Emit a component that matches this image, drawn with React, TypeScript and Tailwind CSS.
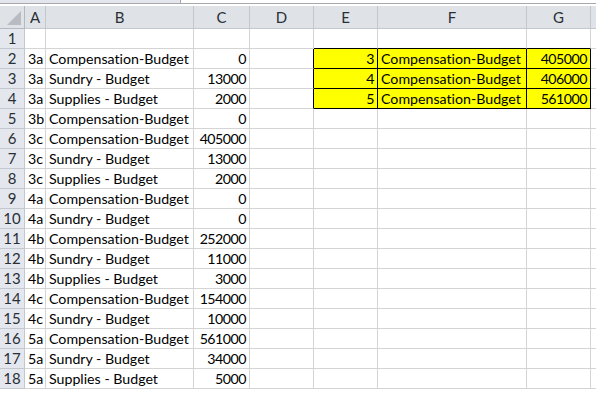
import React from 'react';

const rows: [string, string, string][] = [
  ['', '', ''],
  ['3a', 'Compensation-Budget', '0'],
  ['3a', 'Sundry - Budget', '13000'],
  ['3a', 'Supplies - Budget', '2000'],
  ['3b', 'Compensation-Budget', '0'],
  ['3c', 'Compensation-Budget', '405000'],
  ['3c', 'Sundry - Budget', '13000'],
  ['3c', 'Supplies - Budget', '2000'],
  ['4a', 'Compensation-Budget', '0'],
  ['4a', 'Sundry - Budget', '0'],
  ['4b', 'Compensation-Budget', '252000'],
  ['4b', 'Sundry - Budget', '11000'],
  ['4b', 'Supplies - Budget', '3000'],
  ['4c', 'Compensation-Budget', '154000'],
  ['4c', 'Sundry - Budget', '10000'],
  ['5a', 'Compensation-Budget', '561000'],
  ['5a', 'Sundry - Budget', '34000'],
  ['5a', 'Supplies - Budget', '5000'],
];

const lookup: Record<number, [string, string, string]> = {
  2: ['3', 'Compensation-Budget', '405000'],
  3: ['4', 'Compensation-Budget', '406000'],
  4: ['5', 'Compensation-Budget', '561000'],
};

const cols = ['A', 'B', 'C', 'D', 'E', 'F', 'G', ''];

const Cell = ({
  children,
  right,
  className = '',
}: {
  children?: React.ReactNode;
  right?: boolean;
  className?: string;
}) => (
  <div
    className={`h-[20px] border-r border-b border-[#d4d4d4] px-[3px] leading-[19px] whitespace-nowrap overflow-hidden ${
      right ? 'text-right tracking-[-0.5px]' : ''
    } ${className}`}
  >
    {children}
  </div>
);

export default function App() {
  return (
    <div
      className="w-[596px] h-[393px] overflow-hidden bg-white text-[14.2px] text-black [font-variant-ligatures:none]"
      style={{ fontFamily: 'Lato, "Liberation Sans", sans-serif' }}
    >
      {/* formula bar edge */}
      <div className="flex h-[4px] border-b border-[#a5a9ae]">
        <div className="w-[181px] bg-[#e3e6ea] border-r border-[#a5a9ae]"></div>
        <div className="flex-1 bg-white"></div>
      </div>
      <div className="h-[2px] bg-white"></div>

      <div className="grid grid-cols-[25px_21px_148px_56px_64px_64px_149px_64px_1fr]">
        {/* column header row */}
        <div className="h-[23px] bg-[#dfe3e8] border-r border-b border-[#b4b9bf] relative">
          <div className="absolute right-[3px] bottom-[3px] w-0 h-0 border-l-[14px] border-l-transparent border-b-[14px] border-b-[#b8bcc2]"></div>
        </div>
        {cols.map((c, i) => (
          <div
            key={i}
            className="h-[23px] bg-[#dfe3e8] border-r border-b border-[#c3c8ce] text-center leading-[22px] text-[15px] text-[#2a2f36]"
          >
            {c}
          </div>
        ))}

        {rows.map((r, i) => {
          const n = i + 1;
          const lk = lookup[n];
          const yellow = 'bg-[#ffff00] border-r-black border-b-black';
          return (
            <React.Fragment key={n}>
              <div className="h-[20px] bg-[#e4e8ee] border-r border-b border-[#c3c8ce] text-center leading-[19px] text-[15px] text-[#2a2f36]">
                {n}
              </div>
              <Cell>{r[0]}</Cell>
              <Cell>{r[1]}</Cell>
              <Cell right>{r[2]}</Cell>
              <Cell className={lk ? 'border-r-black' : ''}></Cell>
              {lk ? (
                <>
                  <Cell right className={yellow}>{lk[0]}</Cell>
                  <Cell className={yellow}>{lk[1]}</Cell>
                  <Cell right className={yellow}>{lk[2]}</Cell>
                </>
              ) : (
                <>
                  <Cell className={n === 1 ? 'border-b-black' : ''}></Cell>
                  <Cell className={n === 1 ? 'border-b-black' : ''}></Cell>
                  <Cell className={n === 1 ? 'border-b-black' : ''}></Cell>
                </>
              )}
              <Cell className="border-r-0"></Cell>
            </React.Fragment>
          );
        })}
      </div>
    </div>
  );
}
